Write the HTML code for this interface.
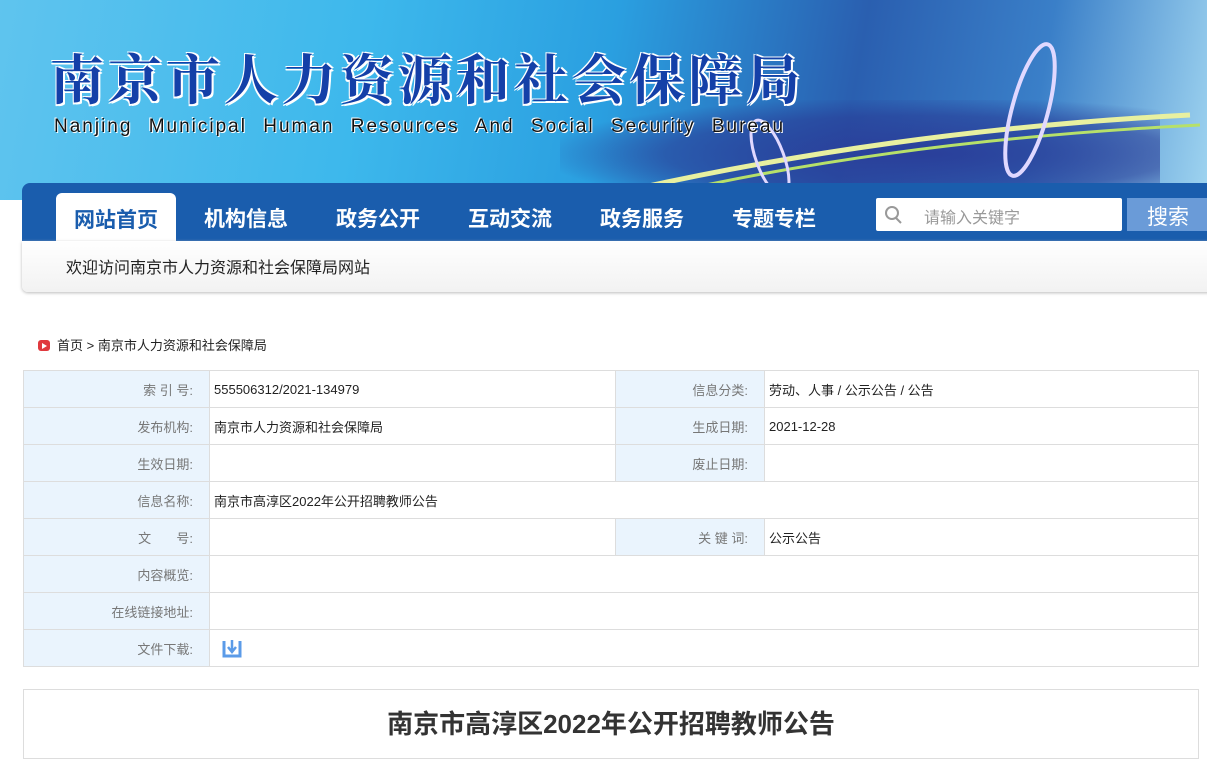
<!DOCTYPE html>
<html><head><meta charset="utf-8"><style>
*{margin:0;padding:0;box-sizing:border-box}
body{width:1207px;height:744px;overflow:hidden;background:#fff;font-family:"Liberation Sans","Noto Sans CJK SC",sans-serif;position:relative}
.banner{position:absolute;left:0;top:0;width:1207px;height:200px;background:linear-gradient(100deg,#5fc4ee 0%,#3db8ec 30%,#2a9fe0 50%,#2a5fb0 70%,#3a7fc8 85%,#9fd4f0 100%)}
.glow{position:absolute;left:560px;top:100px;width:600px;height:90px;background:radial-gradient(ellipse at 60% 60%,#2a3f9a 0%,rgba(40,60,150,.6) 50%,rgba(0,0,0,0) 75%)}
.bridge{position:absolute;left:600px;top:40px}
.t1{position:absolute;left:50px;top:38px;font-size:54px;font-weight:bold;color:#1440a8;letter-spacing:4px;font-family:"Noto Serif CJK SC",serif;text-shadow:2px 2px 0 #fff,-1px -1px 0 #fff,2px -1px 0 #fff,-1px 2px 0 #fff}
.t2{position:absolute;left:54px;top:116px;font-size:19px;color:#111;word-spacing:9px;letter-spacing:2px;text-shadow:1px 1px 0 #fff,-1px -1px 0 #fff}
.nav{position:absolute;left:22px;top:183px;width:1200px;height:58px;background:#1a5dad;border-radius:8px 0 0 0}
.nav span{position:absolute;top:20px;color:#fff;font-size:21px;font-weight:bold}
.nav .on{left:34px;top:10px;width:120px;height:48px;background:#fff;border-radius:6px 6px 0 0;color:#1a5dad;text-align:center;padding-top:11px}
.search{position:absolute;left:854px;top:15px;width:246px;height:33px;background:#fff;border-radius:2px;color:#999;font-size:16px;padding:6px 0 0 48px}
.btn{position:absolute;left:1105px;top:15px;width:110px;height:33px;background:#6a9bd8;color:#fff;font-size:21px;padding:3px 0 0 20px}
.welcome{position:absolute;left:22px;top:241px;width:1200px;height:51px;background:linear-gradient(#fff,#f2f2f2);box-shadow:0 1px 3px #bbb;font-size:16px;color:#222;padding:13px 0 0 44px;border-radius:0 0 0 6px}
.crumb{position:absolute;left:38px;top:335px;font-size:13px;color:#222}
.crumb i{display:inline-block;width:12px;height:11px;background:#e0393e;border-radius:3px;vertical-align:-1px;margin-right:7px;position:relative}
.crumb i:after{content:"";position:absolute;left:4px;top:2.5px;border-left:5px solid #fff;border-top:3px solid transparent;border-bottom:3px solid transparent}
table{position:absolute;left:23px;top:370px;width:1176px;border-collapse:collapse;font-size:13px;color:#222;table-layout:fixed}
td{border:1px solid #ddd;height:37px;padding:0 4px}
td.l{background:#eaf4fd;color:#777;text-align:right;padding-right:16px}
.box{position:absolute;left:23px;top:689px;width:1176px;height:70px;border:1px solid #ddd;text-align:center;font-size:26px;color:#333;font-weight:bold;padding-top:14px}
</style></head><body>
<div class="banner"><div class="glow"></div>
<svg class="bridge" width="600" height="160"><path d="M30 150 Q300 90 590 75" stroke="#e8f0a0" stroke-width="5" fill="none"/><path d="M60 155 Q300 100 600 85" stroke="#b6e06a" stroke-width="3" fill="none"/><ellipse cx="430" cy="70" rx="18" ry="68" stroke="#e0d8ff" stroke-width="4" fill="none" transform="rotate(15 430 70)"/><ellipse cx="170" cy="118" rx="14" ry="40" stroke="#e0d8ff" stroke-width="3" fill="none" transform="rotate(-20 170 118)"/></svg>
<div class="t1">南京市人力资源和社会保障局</div>
<div class="t2">Nanjing Municipal Human Resources And Social Security Bureau</div></div>
<div class="nav"><span class="on">网站首页</span><span style="left:182px">机构信息</span><span style="left:314px">政务公开</span><span style="left:446px">互动交流</span><span style="left:578px">政务服务</span><span style="left:710px">专题专栏</span>
<div class="search"><svg style="position:absolute;left:8px;top:7px" width="20" height="20"><circle cx="8" cy="8" r="6" stroke="#999" stroke-width="2" fill="none"/><path d="M12 13 L17 18" stroke="#999" stroke-width="2"/></svg>请输入关键字</div>
<div class="btn">搜索</div></div>
<div class="welcome">欢迎访问南京市人力资源和社会保障局网站</div>
<div class="crumb"><i></i>首页 &gt; 南京市人力资源和社会保障局</div>
<table>
<colgroup><col style="width:186px"><col style="width:406px"><col style="width:149px"><col></colgroup>
<tr><td class="l">索 引 号:</td><td>555506312/2021-134979</td><td class="l">信息分类:</td><td>劳动、人事 / 公示公告 / 公告</td></tr>
<tr><td class="l">发布机构:</td><td>南京市人力资源和社会保障局</td><td class="l">生成日期:</td><td>2021-12-28</td></tr>
<tr><td class="l">生效日期:</td><td></td><td class="l">废止日期:</td><td></td></tr>
<tr><td class="l">信息名称:</td><td colspan="3">南京市高淳区2022年公开招聘教师公告</td></tr>
<tr><td class="l">文 &nbsp; &nbsp; &nbsp; 号:</td><td></td><td class="l">关 键 词:</td><td>公示公告</td></tr>
<tr><td class="l">内容概览:</td><td colspan="3"></td></tr>
<tr><td class="l">在线链接地址:</td><td colspan="3"></td></tr>
<tr><td class="l">文件下载:</td><td colspan="3"><svg width="20" height="20" style="margin-left:8px;vertical-align:middle"><path d="M2 3 V18 H18 V3" stroke="#5b9be8" stroke-width="3" fill="none"/><path d="M10 2 V13 M6 9 L10 14 L14 9" stroke="#5b9be8" stroke-width="2.5" fill="none"/></svg></td></tr>
</table>
<div class="box">南京市高淳区2022年公开招聘教师公告</div>
</body></html>
